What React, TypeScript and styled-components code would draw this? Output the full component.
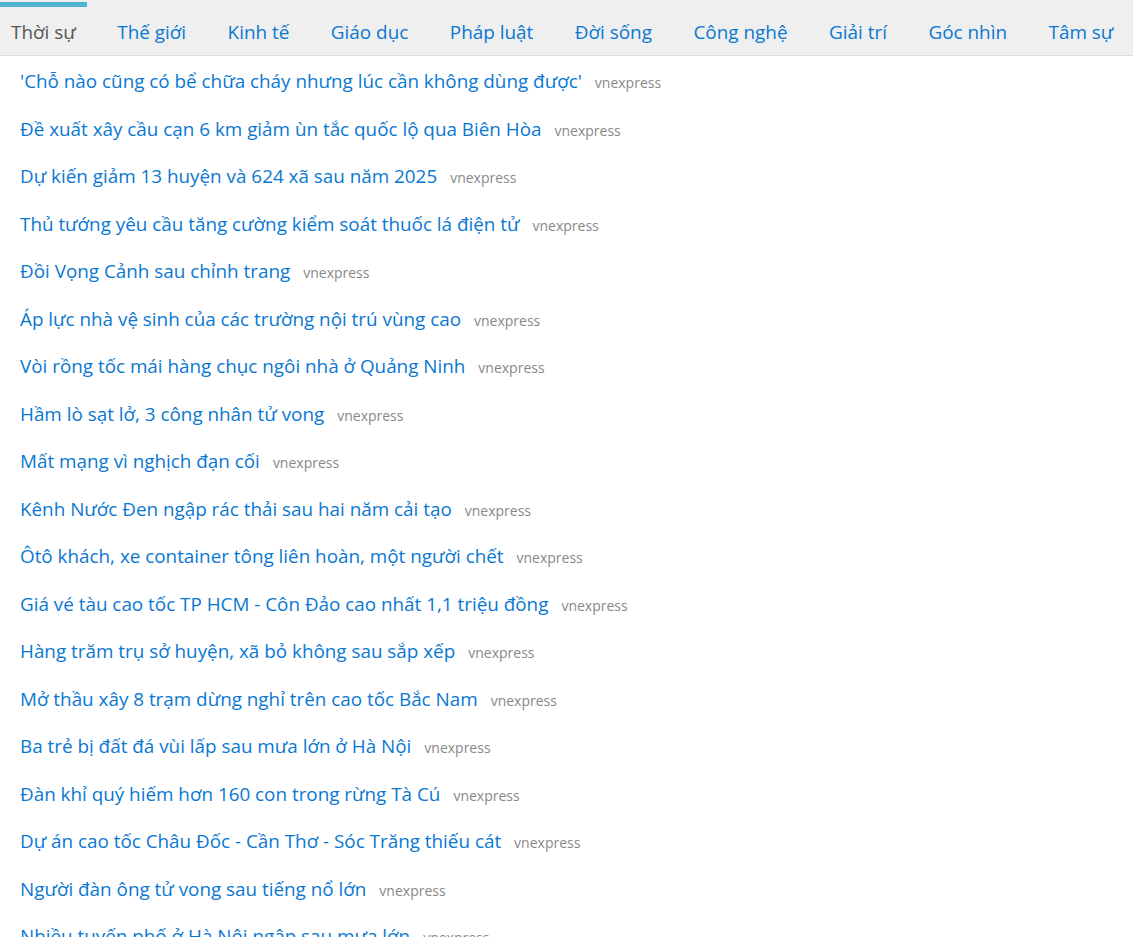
import React from "react";
import styled, { createGlobalStyle } from "styled-components";

const GlobalStyle = createGlobalStyle`
  html, body {
    margin: 0;
    padding: 0;
    background: #ffffff;
  }
  body {
    font-family: "Open Sans", "Noto Sans", sans-serif;
  }
`;

const Nav = styled.nav`
  display: flex;
  align-items: stretch;
  height: 55px;
  background: #efefef;
  border-bottom: 1px solid #dcdcdc;
  box-sizing: content-box;
`;

const Tab = styled.a<{ $active?: boolean }>`
  position: relative;
  display: flex;
  align-items: center;
  padding: 8px 11px 0;
  margin-right: 19.5px;
  font-size: 18.9px;
  color: ${(p) => (p.$active ? "#555555" : "#0a78d2")};
  text-decoration: none;
  white-space: nowrap;
  cursor: pointer;
  &::before {
    content: "";
    position: absolute;
    left: 0;
    right: 0;
    top: 2px;
    height: 5px;
    background: ${(p) => (p.$active ? "#4db3d0" : "transparent")};
  }
`;

const List = styled.ul`
  list-style: none;
  margin: 0;
  padding: 2px 0 0;
`;

const Item = styled.li`
  display: flex;
  align-items: baseline;
  height: 47.5px;
  padding: 0 20px;
  line-height: 47.5px;
  white-space: nowrap;
`;

const Title = styled.a`
  font-size: 18.85px;
  color: #0a78d2;
  text-decoration: none;
`;

const Source = styled.span`
  margin-left: 13px;
  font-size: 14px;
  color: #888888;
`;

const tabs = [
  "Thời sự",
  "Thế giới",
  "Kinh tế",
  "Giáo dục",
  "Pháp luật",
  "Đời sống",
  "Công nghệ",
  "Giải trí",
  "Góc nhìn",
  "Tâm sự",
];

const news = [
  "'Chỗ nào cũng có bể chữa cháy nhưng lúc cần không dùng được'",
  "Đề xuất xây cầu cạn 6 km giảm ùn tắc quốc lộ qua Biên Hòa",
  "Dự kiến giảm 13 huyện và 624 xã sau năm 2025",
  "Thủ tướng yêu cầu tăng cường kiểm soát thuốc lá điện tử",
  "Đồi Vọng Cảnh sau chỉnh trang",
  "Áp lực nhà vệ sinh của các trường nội trú vùng cao",
  "Vòi rồng tốc mái hàng chục ngôi nhà ở Quảng Ninh",
  "Hầm lò sạt lở, 3 công nhân tử vong",
  "Mất mạng vì nghịch đạn cối",
  "Kênh Nước Đen ngập rác thải sau hai năm cải tạo",
  "Ôtô khách, xe container tông liên hoàn, một người chết",
  "Giá vé tàu cao tốc TP HCM - Côn Đảo cao nhất 1,1 triệu đồng",
  "Hàng trăm trụ sở huyện, xã bỏ không sau sắp xếp",
  "Mở thầu xây 8 trạm dừng nghỉ trên cao tốc Bắc Nam",
  "Ba trẻ bị đất đá vùi lấp sau mưa lớn ở Hà Nội",
  "Đàn khỉ quý hiếm hơn 160 con trong rừng Tà Cú",
  "Dự án cao tốc Châu Đốc - Cần Thơ - Sóc Trăng thiếu cát",
  "Người đàn ông tử vong sau tiếng nổ lớn",
  "Nhiều tuyến phố ở Hà Nội ngập sau mưa lớn",
  "Cháy xưởng gỗ ở Bình Dương",
];

export default function App() {
  return (
    <>
      <GlobalStyle />
      <Nav>
        {tabs.map((t, i) => (
          <Tab key={t} $active={i === 0}>
            {t}
          </Tab>
        ))}
      </Nav>
      <List>
        {news.map((n) => (
          <Item key={n}>
            <Title>{n}</Title>
            <Source>vnexpress</Source>
          </Item>
        ))}
      </List>
    </>
  );
}
